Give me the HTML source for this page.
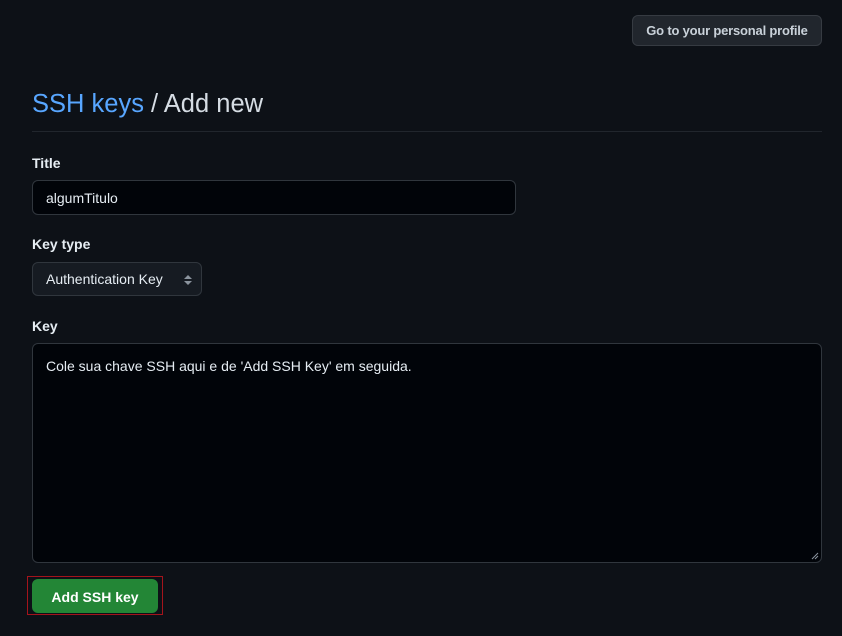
<!DOCTYPE html>
<html><head><style>
body{margin:0;background:#0d1117;width:842px;height:636px;overflow:hidden;font-family:"Liberation Sans",sans-serif;color:#e6edf3;position:relative}
.a{position:absolute;box-sizing:border-box}
.btn{left:632px;top:15px;width:190px;height:31px;background:#21262d;border:1px solid #363b42;border-radius:6px;font-size:13px;font-weight:bold;color:#c9d1d9;text-align:center;line-height:29px;letter-spacing:-0.2px}
h1{position:absolute;left:32px;top:90px;margin:0;font-size:25.5px;font-weight:normal;color:#d6dde4;letter-spacing:0px}
h1 span{color:#58a6ff}
.hr{left:32px;top:131px;width:790px;height:1px;background:#21262d}
.lbl{left:32px;font-size:14px;font-weight:bold;color:#e6edf3}
.in{background:#010409;border:1px solid #30363d;border-radius:6px;font-size:14px;color:#e6edf3;padding-left:13px}
.sel{background:#161b22}
.go{left:32px;top:579px;width:126px;height:34px;background:#238636;border-radius:6px;color:#fff;font-weight:bold;font-size:14px;text-align:center;line-height:36px}
.red{left:27px;top:576px;width:136px;height:39px;border:1px solid #a4141c}
</style></head><body>
<div class="a btn">Go to your personal profile</div>
<h1><span>SSH keys</span> / Add new</h1>
<div class="a hr"></div>
<div class="a lbl" style="top:155px">Title</div>
<div class="a in" style="left:32px;top:180px;width:484px;height:35px;line-height:34px">algumTitulo</div>
<div class="a lbl" style="top:236px">Key type</div>
<div class="a in sel" style="left:32px;top:262px;width:170px;height:34px;line-height:33px">Authentication Key
<svg style="position:absolute;left:150px;top:11px" width="10" height="12" viewBox="0 0 10 12"><path d="M1 5L5 1L9 5Z M1 7L5 11L9 7Z" fill="#8b949e"/></svg></div>
<div class="a lbl" style="top:318px">Key</div>
<div class="a in" style="left:32px;top:343px;width:790px;height:220px;padding-top:13px;line-height:18px">Cole sua chave SSH aqui e de 'Add SSH Key' em seguida.
<svg style="position:absolute;right:2px;bottom:2px" width="8" height="8"><path d="M7 1L1 7M7 4L4 7" stroke="#8b949e" stroke-width="1"/></svg></div>
<div class="a red"></div>
<div class="a go">Add SSH key</div>
</body></html>
